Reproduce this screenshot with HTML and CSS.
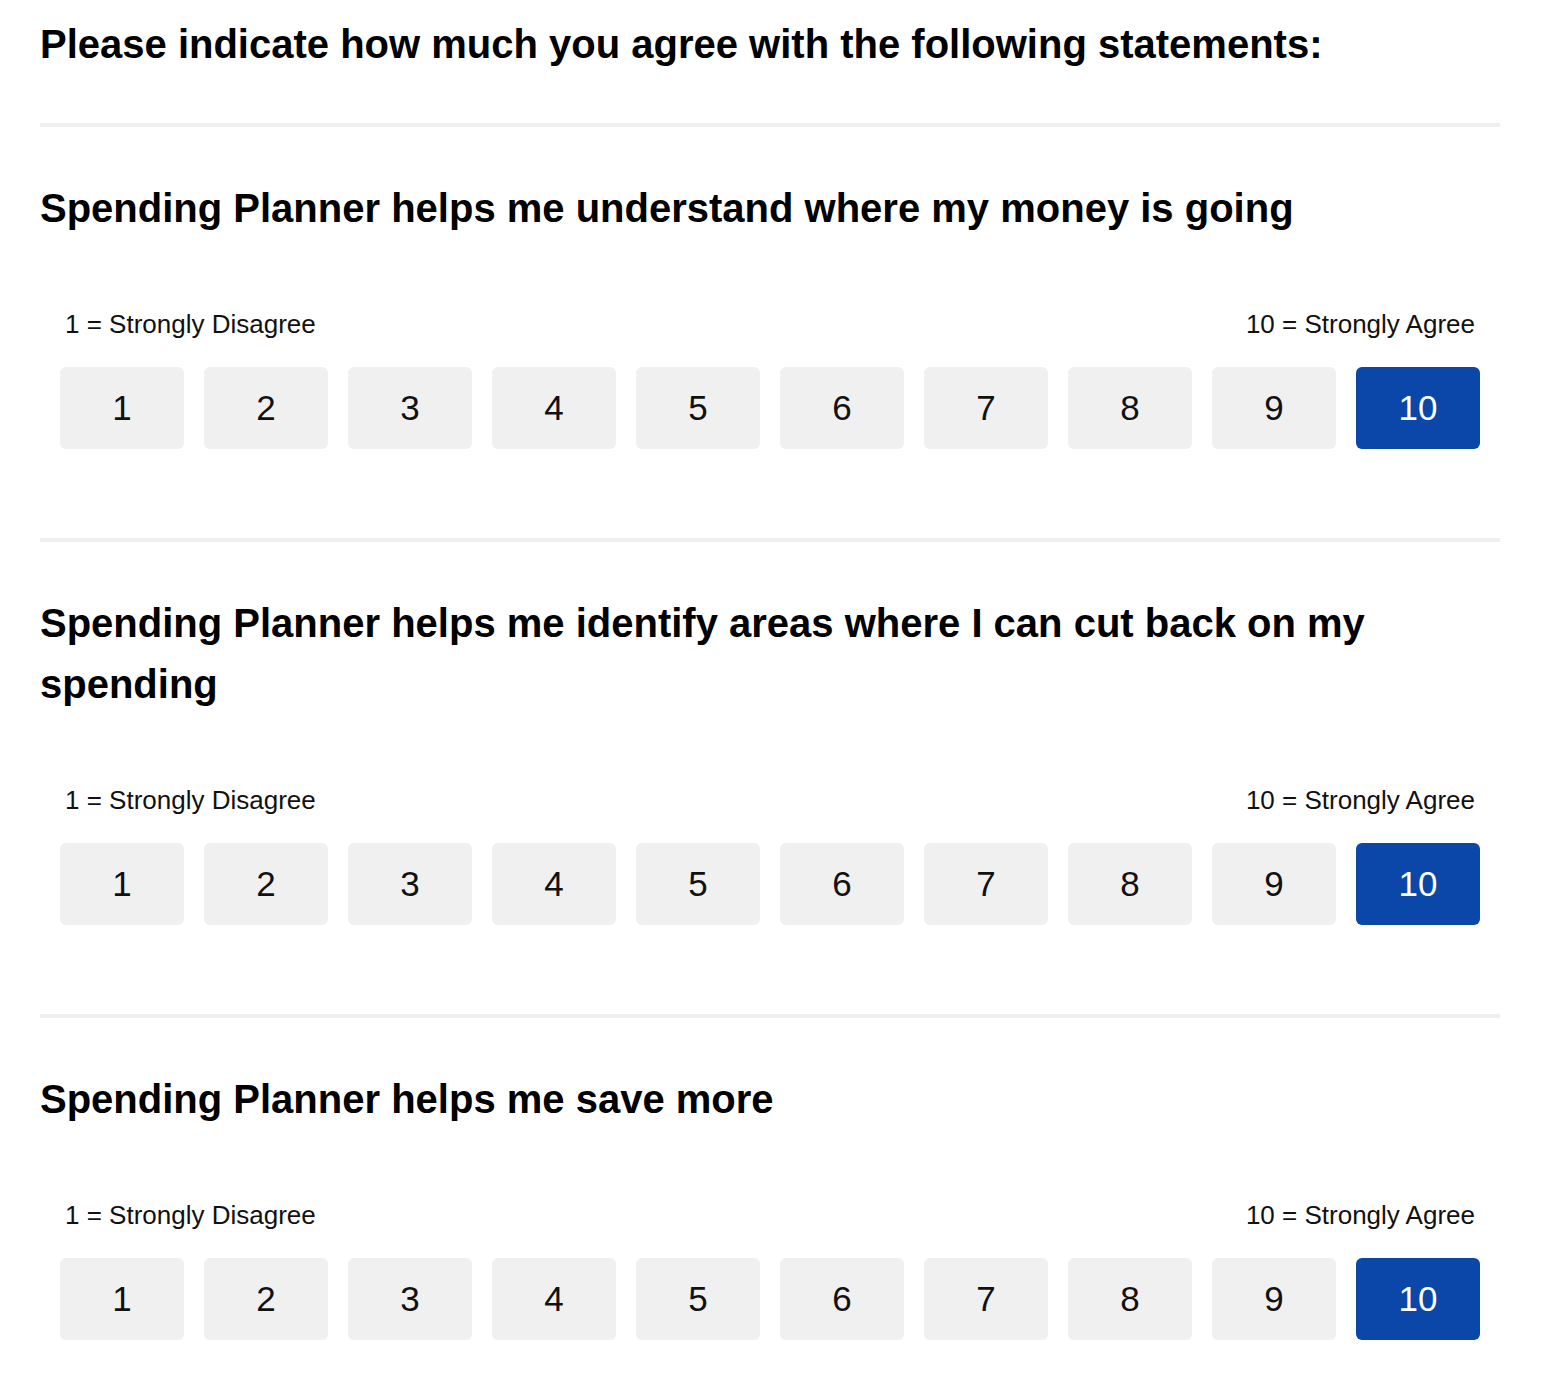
FILE: index.html
```html
<!DOCTYPE html>
<html lang="en">
<head>
<meta charset="utf-8">
<title>Survey</title>
<link rel="stylesheet" href="styles.css">
</head>
<body>
<main class="survey">
  <h1 class="intro">Please indicate how much you agree with the following statements:</h1>

  <section class="question">
    <h2 class="statement">Spending Planner helps me understand where my money is going</h2>
    <div class="scale-labels"><span>1 = Strongly Disagree</span><span>10 = Strongly Agree</span></div>
    <div class="scale">
      <button class="opt">1</button><button class="opt">2</button><button class="opt">3</button><button class="opt">4</button><button class="opt">5</button><button class="opt">6</button><button class="opt">7</button><button class="opt">8</button><button class="opt">9</button><button class="opt selected">10</button>
    </div>
  </section>

  <section class="question">
    <h2 class="statement">Spending Planner helps me identify areas where I can cut back on my spending</h2>
    <div class="scale-labels"><span>1 = Strongly Disagree</span><span>10 = Strongly Agree</span></div>
    <div class="scale">
      <button class="opt">1</button><button class="opt">2</button><button class="opt">3</button><button class="opt">4</button><button class="opt">5</button><button class="opt">6</button><button class="opt">7</button><button class="opt">8</button><button class="opt">9</button><button class="opt selected">10</button>
    </div>
  </section>

  <section class="question">
    <h2 class="statement">Spending Planner helps me save more</h2>
    <div class="scale-labels"><span>1 = Strongly Disagree</span><span>10 = Strongly Agree</span></div>
    <div class="scale">
      <button class="opt">1</button><button class="opt">2</button><button class="opt">3</button><button class="opt">4</button><button class="opt">5</button><button class="opt">6</button><button class="opt">7</button><button class="opt">8</button><button class="opt">9</button><button class="opt selected">10</button>
    </div>
  </section>
</main>
</body>
</html>
```
FILE: styles.css
```css
html, body {
  margin: 0;
  padding: 0;
  background: #ffffff;
}

body {
  font-family: "Liberation Sans", Arial, Helvetica, sans-serif;
  color: #000000;
}

.survey {
  width: 1460px;
  padding: 0 46px 0 40px;
}

.intro {
  margin: 0;
  padding: 14px 0 49px;
  font-size: 40px;
  line-height: 60px;
  font-weight: 700;
}

.question {
  border-top: 4px solid #efeff1;
  padding: 51px 0 89px;
}

.statement {
  margin: 0;
  font-size: 40px;
  line-height: 61px;
  font-weight: 700;
}

.scale-labels {
  display: flex;
  justify-content: space-between;
  margin-top: 71px;
  padding: 0 25px;
  font-size: 26px;
  line-height: 28px;
  color: #111111;
}

.scale {
  display: flex;
  gap: 20px;
  margin-top: 29px;
  padding: 0 20px;
}

.opt {
  flex: 1 1 0;
  height: 82px;
  border: none;
  border-radius: 6px;
  background: #f0f0f0;
  font-family: inherit;
  font-size: 35px;
  color: #111111;
  padding: 0;
}

.opt.selected {
  background: #0a47a8;
  color: #ffffff;
}
```
